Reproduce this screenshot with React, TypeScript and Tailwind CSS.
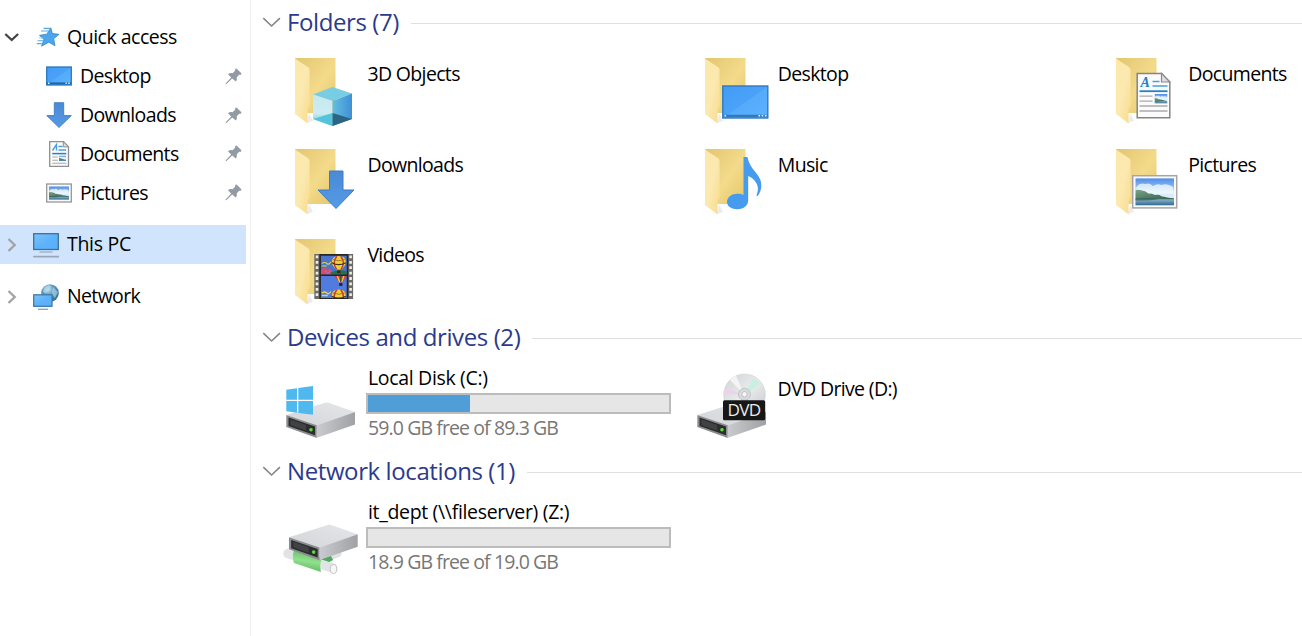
import React from "react";

type Kind = "objects" | "desktop" | "documents" | "downloads" | "music" | "pictures" | "videos";

function Defs() {
  return (
    <svg className="absolute h-0 w-0" aria-hidden="true">
      <defs>
        <linearGradient id="back" x1="0" y1="0" x2="1" y2="1">
          <stop offset="0" stopColor="#e3c56f" />
          <stop offset=".55" stopColor="#f3db8b" />
          <stop offset="1" stopColor="#e5c466" />
        </linearGradient>
        <linearGradient id="leaf" x1="0" y1="0" x2="1" y2="1">
          <stop offset="0" stopColor="#fde8a9" />
          <stop offset=".5" stopColor="#fbe9b0" />
          <stop offset="1" stopColor="#f9db8b" />
        </linearGradient>
        <linearGradient id="screen" x1="0" y1="0" x2="1" y2="1">
          <stop offset="0" stopColor="#429bf5" />
          <stop offset=".5" stopColor="#4ba2f8" />
          <stop offset=".51" stopColor="#55abfb" />
          <stop offset="1" stopColor="#5cb3ff" />
        </linearGradient>
        <linearGradient id="monitor" x1="0" y1="0" x2="1" y2="1">
          <stop offset="0" stopColor="#7cc4fb" />
          <stop offset=".5" stopColor="#5fb3fb" />
          <stop offset="1" stopColor="#5aaefa" />
        </linearGradient>
        <linearGradient id="arrow" x1="0" y1="0" x2="0" y2="1">
          <stop offset="0" stopColor="#4a8ad6" />
          <stop offset="1" stopColor="#559ae6" />
        </linearGradient>
        <linearGradient id="sky" x1="0" y1="0" x2="0" y2="1">
          <stop offset="0" stopColor="#4f8be8" />
          <stop offset=".3" stopColor="#86b6f2" />
          <stop offset=".5" stopColor="#dceefb" />
          <stop offset="1" stopColor="#d2e8f5" />
        </linearGradient>
        <linearGradient id="lake" x1="0" y1="0" x2="0" y2="1">
          <stop offset="0" stopColor="#9dc0cd" />
          <stop offset=".5" stopColor="#6596b3" />
          <stop offset="1" stopColor="#2d6690" />
        </linearGradient>
        <linearGradient id="hill" x1="0" y1="0" x2="1" y2="1">
          <stop offset="0" stopColor="#7ba584" />
          <stop offset="1" stopColor="#315b50" />
        </linearGradient>
        <linearGradient id="cubeL" x1="0" y1="0" x2="0" y2="1">
          <stop offset="0" stopColor="#c5e9f0" />
          <stop offset=".6" stopColor="#cdebf2" />
          <stop offset="1" stopColor="#57c6dc" />
        </linearGradient>
        <linearGradient id="cubeR" x1="0" y1="0" x2="1" y2="0">
          <stop offset="0" stopColor="#63bfdf" />
          <stop offset="1" stopColor="#3f8fd6" />
        </linearGradient>
        <linearGradient id="metal" x1="0" y1="0" x2="1" y2="0">
          <stop offset="0" stopColor="#c9cbce" />
          <stop offset="1" stopColor="#9fa1a4" />
        </linearGradient>
        <linearGradient id="lid" x1="0" y1="1" x2="1" y2="0">
          <stop offset="0" stopColor="#d3d5d8" />
          <stop offset="1" stopColor="#e4e6e9" />
        </linearGradient>
        <linearGradient id="disc" x1="0" y1="0" x2="1" y2="1">
          <stop offset="0" stopColor="#cfd3d5" />
          <stop offset=".5" stopColor="#e9ebec" />
          <stop offset="1" stopColor="#c2c7ca" />
        </linearGradient>
        <linearGradient id="pipe" x1="0.2" y1="0" x2="0" y2="1">
          <stop offset="0" stopColor="#5fc063" />
          <stop offset=".45" stopColor="#92e08e" />
          <stop offset="1" stopColor="#4fb058" />
        </linearGradient>
        <radialGradient id="globe" cx=".4" cy=".3" r=".75">
          <stop offset="0" stopColor="#b5dcef" />
          <stop offset=".5" stopColor="#5593b8" />
          <stop offset="1" stopColor="#2f6890" />
        </radialGradient>
      </defs>
    </svg>
  );
}

function Landscape() {
  return (
    <g>
      <rect width="40" height="28" fill="url(#sky)" />
      <path d="M1 9q4-5 9-3q5-2 8 2q5-3 9-1q6-2 12 2v7H1z" fill="#eff7fd" opacity=".8" />
      <path d="M0 20.5h40V28H0z" fill="url(#lake)" />
      <path d="M0 12.5q3-1 6 0q4 .5 8 3.500q3-1 6 1.300q4-1 7 1.200q4 .8 7 1.500l6 1v.6H0z" fill="url(#hill)" />
      <path d="M0 21q14-1.200 24 .6q-11 1.800-24 1.300z" fill="#2f5456" opacity=".65" />
    </g>
  );
}

function Balloon() {
  return (
    <g>
      <path d="M-7 -1.2Q-7 -7.5 0 -7.5T7 -1.2Q6.6 2.8 2.4 6H-2.4Q-6.6 2.8-7 -1.2z" fill="#f3cf32" />
      <path d="M-2 -7.3Q-7 -1-2.2 6M2 -7.3Q7 -1 2.2 6" fill="none" stroke="#c43d3a" strokeWidth="1.5" />
      <path d="M-7 -.8Q0 3.2 7 -.8" fill="none" stroke="#3a3327" strokeWidth="1.3" />
      <path d="M-6 -4Q0 -1.5 6 -4" fill="none" stroke="#8d6a2c" strokeWidth=".8" />
      <rect x="-1.8" y="7" width="3.6" height="2.6" fill="#352a1c" />
    </g>
  );
}

function Overlay({ kind }: { kind: Kind }) {
  switch (kind) {
    case "objects":
      return (
        <g>
          <path d="M45.5 35L65 41.5L45.5 49L26 42.5z" fill="#79cde3" />
          <path d="M26 42.5L45.5 49V74L26 67z" fill="url(#cubeL)" />
          <path d="M65 41.5L45.5 49V74L65 67z" fill="url(#cubeR)" />
          <path d="M45.5 61L26 67L45.5 74z" fill="#55c4d8" />
          <path d="M45.5 61L65 67L45.5 74z" fill="#2b6484" />
        </g>
      );
    case "desktop":
      return (
        <g>
          <rect x="25.8" y="34" width="45" height="32" fill="url(#screen)" stroke="#2f79bd" strokeWidth="1.4" />
          <path d="M26.5 63.8h44" stroke="#2f79bd" strokeWidth="2.2" />
          <path d="M27.5 63.7h1.6M61.5 63.7h1.6M64.7 63.7h1.6M67.9 63.7h1.6" stroke="#e4f2ff" strokeWidth="1.6" />
        </g>
      );
    case "documents":
      return (
        <g>
          <path d="M29.2 21.4H53.5L61.8 30V65.7H29.2z" fill="#fbfbfb" stroke="#858585" strokeWidth="1.5" />
          <path d="M53.5 21.4V30H61.8z" fill="#dedede" stroke="#8a8a8a" strokeWidth="1.2" />
          <text x="32.5" y="35" fontFamily="Liberation Serif, serif" fontStyle="italic" fontWeight="700" fontSize="14" fill="#2380c9">A</text>
          <path d="M44.5 29.5h7M44.5 34h15" stroke="#4b9fdd" strokeWidth="1.4" />
          <path d="M31.5 39.2h28" stroke="#2380c9" strokeWidth="1.8" />
          <path d="M31.5 44.2h13M31.5 49.2h13M31.5 54h28M31.5 59h28" stroke="#ababab" strokeWidth="1.3" />
          <svg x="46.5" y="42" width="13" height="9.5" viewBox="0 0 40 28" preserveAspectRatio="none"><Landscape /></svg>
        </g>
      );
    case "downloads":
      return <path d="M42.5 28H56V47H67L49 65.5L31 47H42.5z" fill="url(#arrow)" stroke="#3d7cc4" strokeWidth="1" />;
    case "music":
      return <path d="M46.5 14H50.5C53 28 65 31 64.3 43C64.2 47 62.8 50.5 60.5 53C59.5 53 59.3 52.5 59.8 51.5C63.8 42 57 35.5 51.2 33V57C51.2 62.4 47 66.2 40.5 66.2C34.5 66.2 30 63.4 30 59C30 54.3 34.8 50.8 40.5 50.8C43 50.8 45 51.3 46.5 52z" fill="#459bee" />;
    case "pictures":
      return (
        <g>
          <rect x="24.7" y="32.7" width="44" height="32.2" fill="#fafafa" stroke="#a5a5a5" strokeWidth="1.5" />
          <svg x="27.3" y="35.2" width="38.8" height="27.2" viewBox="0 0 40 28" preserveAspectRatio="none"><Landscape /></svg>
        </g>
      );
    case "videos":
      return (
        <g>
          <rect x="27.3" y="21" width="38.8" height="45" fill="#6b6b6b" />
          <rect x="32.3" y="21" width="29" height="45" fill="#272727" />
          <path d="M30 22.5v43M63.6 22.5v43" stroke="#f1eedf" strokeWidth="2.6" strokeDasharray="2.8 2.6" />
          <svg x="33.7" y="22.5" width="26.2" height="19" viewBox="0 0 26 19" overflow="hidden">
            <rect width="26" height="19" fill="#4b74cd" />
            <path d="M1 8q3-2 5 0t4-1.5M1 10.5h5" stroke="#d8d44f" strokeWidth="1.2" fill="none" />
            <path d="M0 15q3-4 6-1.500q3-1.500 5 2V19H0z" fill="#d44e67" />
            <path d="M4 15l3 3 3-3" fill="none" stroke="#b56bb0" strokeWidth="1.2" />
            <path d="M10 17q8-4 16-1v3H10z" fill="#26753e" />
            <g transform="translate(18 8)"><Balloon /></g>
          </svg>
          <svg x="33.7" y="43" width="26.2" height="22" viewBox="0 0 26 22" overflow="hidden">
            <rect width="26" height="22" fill="#527be0" />
            <path d="M13.5 0H26L21.5 6.5h-3z" fill="#cc3b50" />
            <path d="M16.5 0l2.4 6M23.2 0l-2.4 6" stroke="#f0cf31" strokeWidth="1.4" />
            <path d="M19.9 0v6" stroke="#2e5c4a" strokeWidth="1.3" />
            <rect x="18.4" y="7.2" width="3.2" height="2.6" fill="#231d16" />
            <path d="M1 17q3-2 5 0t4-1.5M1 19.5h6" stroke="#e2d650" strokeWidth="1.3" fill="none" />
            <g transform="translate(18 21)"><Balloon /></g>
          </svg>
        </g>
      );
  }
}

function FolderIcon({ kind }: { kind: Kind }) {
  return (
    <svg className="size-20 shrink-0" viewBox="0 0 80 80" aria-hidden="true">
      <path d="M20 71l6-2-4-8z" fill="#ececec" />
      <path d="M8 6H48.5V61H19z" fill="url(#back)" />
      <path d="M8 6.5L20.8 15Q22.6 16.2 22.6 18V53.5Q22.6 55 21.6 56Q20.6 57 20.6 58.5V71.5L8 62z" fill="url(#leaf)" />
      <Overlay kind={kind} />
    </svg>
  );
}

function DriveBody() {
  return (
    <g>
      <path d="M6.3 49L45 36.8Q46.7 36.2 48.4 36.8L75 46L36.5 60z" fill="url(#lid)" />
      <path d="M36.5 59.5L75 46V58.5L37 71.7z" fill="url(#metal)" />
      <path d="M6.3 49L36.7 59.3V72L6.3 61z" fill="#8b8c8e" />
      <path d="M8.5 51.6L35 60.6V69.3L8.5 60z" fill="#2c2d2e" />
      <path d="M10.5 53.5L26 59V64.5L10.5 59z" fill="#414243" />
      <circle cx="31" cy="63.8" r="1.8" fill="#5edb3d" />
    </g>
  );
}

function LocalDiskIcon() {
  return (
    <svg className="size-20 shrink-0" viewBox="0 0 80 80" aria-hidden="true">
      <DriveBody />
      <path d="M6.3 23.7L17 22.2V33.8H6.3zM18.3 22L33 20.1V33.8H18.3zM6.3 35.1H17V46.7L6.3 45.3zM18.3 35.1H33V48.8L18.3 46.9z" fill="#4fb9ef" />
    </svg>
  );
}

function DvdIcon() {
  return (
    <svg className="size-20 shrink-0" viewBox="0 0 80 80" aria-hidden="true">
      <DriveBody />
      <circle cx="53.5" cy="28.8" r="20.8" fill="url(#disc)" stroke="#cbd0d2" strokeWidth=".6" />
      <path d="M53.5 28.8L62 12.5Q66 14 69 17.5z" fill="#c8efdf" />
      <path d="M53.5 28.8L34 22Q33 25 33 28z" fill="#ecd3ec" />
      <path d="M53.5 28.8L39 14Q42 10.8 45 9.8z" fill="#f3f4f4" />
      <circle cx="53.5" cy="28.3" r="6" fill="#d8dbdd" stroke="#bfc4c7" strokeWidth="1" />
      <circle cx="53.5" cy="28.3" r="2.7" fill="#f8f8f8" stroke="#afb4b6" strokeWidth=".8" />
      <rect x="32" y="34.2" width="42.2" height="20" rx="1.5" fill="#171717" />
      <text x="53" y="49.8" textAnchor="middle" fontFamily="Open Sans, sans-serif" fontSize="15.5" textLength="33" lengthAdjust="spacingAndGlyphs" fill="#ececec">DVD</text>
    </svg>
  );
}

function NetworkDriveIcon() {
  return (
    <svg className="size-20 shrink-0" viewBox="0 0 80 80" aria-hidden="true">
      <path d="M42 60L58 53.5" stroke="#dfe1e2" strokeWidth="7" strokeLinecap="round" />
      <path d="M38 63L51 56" stroke="#4fa864" strokeWidth="9" />
      <path d="M8 53.5L52.5 68" stroke="#e1e4e4" strokeWidth="9.5" strokeLinecap="round" />
      <path d="M14.5 49L42 58.5Q39 64 41 72L14 63Q11.500 56 14.5 49z" fill="url(#pipe)" />
      <ellipse cx="53.5" cy="69" rx="3.3" ry="4.5" fill="#f6f6f6" stroke="#c2c5c6" strokeWidth="1" />
      <g transform="translate(2.7 -11.7)">
        <DriveBody />
      </g>
    </svg>
  );
}

function MiniIcon({ kind }: { kind: "desktop" | "downloads" | "documents" | "pictures" }) {
  return (
    <svg className="size-[26px] shrink-0" viewBox="0 0 26 26" aria-hidden="true">
      {kind === "desktop" && (
        <g>
          <rect x=".7" y="4" width="24.6" height="18" fill="url(#screen)" stroke="#2979bf" strokeWidth="1.3" />
          <path d="M1 20.4h24" stroke="#1d65ab" strokeWidth="2" />
          <path d="M2 20.3h1.5M19.5 20.3h1.3M22.2 20.3h1.5" stroke="#e4f2ff" strokeWidth="1.4" />
        </g>
      )}
      {kind === "downloads" && <path d="M8.3.7H17.7V13.6H25.3L13 25.5L.8 13.6H8.3z" fill="url(#arrow)" stroke="#3d7cc4" strokeWidth=".9" />}
      {kind === "documents" && (
        <g>
          <path d="M3.7.7H17.5L22.5 5.7V25.3H3.7z" fill="#fbfbfb" stroke="#8e9091" strokeWidth="1.3" />
          <path d="M17.3.7V5.9H22.5z" fill="#ddd" stroke="#8e9091" strokeWidth="1" />
          <path d="M6.5 9.5L10.5 3.5V9.5M12.5 5.5h4M12.5 9h7.5" stroke="#4b9fdd" strokeWidth="1.4" fill="none" />
          <path d="M6.3 12.6h14" stroke="#2380c9" strokeWidth="1.5" />
          <path d="M6.3 16h5.5M6.3 19.2h5.5M6.3 22.2h14" stroke="#a9a9a9" strokeWidth="1.1" />
          <svg x="13" y="14.5" width="7" height="5.5" viewBox="0 0 40 28" preserveAspectRatio="none"><Landscape /></svg>
        </g>
      )}
      {kind === "pictures" && (
        <g>
          <rect x=".7" y="4" width="24.6" height="18" fill="#fafafa" stroke="#979797" strokeWidth="1.3" />
          <svg x="3" y="6.3" width="20" height="13.4" viewBox="0 0 40 28" preserveAspectRatio="none"><Landscape /></svg>
        </g>
      )}
    </svg>
  );
}

function Pin() {
  return (
    <svg className="ml-auto h-[17px] w-[17px] shrink-0" viewBox="0 0 17 17" aria-hidden="true">
      <path d="M10.4.8Q11.2.3 12 1L16.1 5.1Q16.7 6 16 6.7Q15 7 14.2 6.7L11.8 9.3Q12.3 12 10.8 13.6L7.2 10.4L1.5 16L.5 16.3L.8 15.2L6.2 9.5L3 6.2Q4.8 4.6 7.5 5.2L10.1 2.7Q9.9 1.6 10.4.8z" fill="#929ba3" />
    </svg>
  );
}

function Chevron({ open }: { open?: boolean }) {
  return (
    <svg className="size-4 shrink-0" viewBox="0 0 16 16" aria-hidden="true">
      {open ? (
        <path d="M1.3 5L7.7 11L14.1 5" fill="none" stroke="#444" strokeWidth="2.3" />
      ) : (
        <path d="M4.5 2L10.7 8L4.5 14" fill="none" stroke="#a3a3a3" strokeWidth="2.4" />
      )}
    </svg>
  );
}

function Star() {
  return (
    <svg className="h-5 w-6 shrink-0" viewBox="0 0 24 20" aria-hidden="true">
      <path d="M14.8.8L16.3 6.5L23 7.3L17.6 11.8L19 18.7L12.8 15.2L5.5 19.2L8 12.6L3.5 8.3L10.8 7.2z" fill="#4ca6ee" stroke="#2e86cd" strokeWidth=".8" />
      <path d="M7.5 1.4h7M5 4h7.5M1.500 13.8h5.5M.8 16.6h5" stroke="#5aa9e6" strokeWidth="1.1" />
      <path d="M3 11h4" stroke="#8cc5f1" strokeWidth=".9" />
    </svg>
  );
}

function Computer() {
  return (
    <svg className="size-[26px] shrink-0" viewBox="0 0 26 26" aria-hidden="true">
      <rect x=".7" y="1.7" width="24.6" height="15.8" fill="url(#monitor)" stroke="#3e7194" strokeWidth="1.3" />
      <path d="M6.5 20h13" stroke="#a5b3c4" strokeWidth="1.5" />
      <path d="M1 24.6h24.6" stroke="#9aa5bb" strokeWidth="1.9" strokeLinecap="round" />
    </svg>
  );
}

function NetworkIcon() {
  return (
    <svg className="size-[26px] shrink-0" viewBox="0 0 26 26" aria-hidden="true">
      <circle cx="17" cy="9" r="8.8" fill="url(#globe)" />
      <path d="M11 4q4-4 7-2l-1 4-4 3-3-1zM20 3l5 5-3 6-3-4z" fill="#c5e2ef" opacity=".55" />
      <rect x=".7" y="10.8" width="18.3" height="11.5" fill="url(#monitor)" stroke="#3e7da9" strokeWidth="1.3" />
      <path d="M5 25.3h10" stroke="#8ba1b9" strokeWidth="1.3" />
    </svg>
  );
}

const text = "whitespace-nowrap text-[19.5px] leading-6";

function SectionHeader({ title }: { title: string }) {
  return (
    <header className="flex h-11 items-center pl-[11px]">
      <svg className="h-4 w-5 shrink-0" viewBox="0 0 20 16" aria-hidden="true">
        <path d="M1.3 4.2L9.6 12L17.9 4.2" fill="none" stroke="#858585" strokeWidth="1.6" />
      </svg>
      <h2 className="ml-[5px] shrink-0 whitespace-nowrap text-[24px] leading-8 tracking-[-0.4px] text-[#2b3a8c]">{title}</h2>
      <div className="ml-3 mt-[3px] h-px grow bg-[#e0e0e0]" />
    </header>
  );
}

const folders: { name: string; kind: Kind }[] = [
  { name: "3D Objects", kind: "objects" },
  { name: "Desktop", kind: "desktop" },
  { name: "Documents", kind: "documents" },
  { name: "Downloads", kind: "downloads" },
  { name: "Music", kind: "music" },
  { name: "Pictures", kind: "pictures" },
  { name: "Videos", kind: "videos" },
];

function Drive({ icon, name, used, free }: { icon: React.ReactNode; name: string; used: number; free: string }) {
  return (
    <div className="flex w-[410.5px] shrink-0">
      {icon}
      <div className="ml-1.5 w-[305px]">
        <div className={`pl-0.5 tracking-[-0.33px] ${text}`}>{name}</div>
        <div className="mt-[3px] h-[21px] border-2 border-[#bcbcbc] bg-[#e6e6e6]">
          <div className="h-full bg-[#4f9ed7]" style={{ width: `${used}%` }} />
        </div>
        <div className={`mt-0.5 pl-0.5 tracking-[-0.9px] text-[#777] ${text}`}>{free}</div>
      </div>
    </div>
  );
}

export default function App() {
  return (
    <div className="flex h-[636px] w-[1302px] overflow-hidden bg-white font-['Open_Sans','Noto_Sans',sans-serif] tracking-[-0.65px] text-black">
      <Defs />
      <nav className="w-[251px] shrink-0 border-r border-[#f0f0f0] pt-[17px]">
        <div className="flex h-10 items-center pl-1">
          <Chevron open />
          <span className="ml-4"><Star /></span>
          <span className={`ml-[7px] tracking-[-0.5px] ${text}`}>Quick access</span>
        </div>
        {(["Desktop", "Downloads", "Documents", "Pictures"] as const).map((name) => (
          <div key={name} className="flex h-[38.75px] items-center pl-[46px] pr-2">
            <MiniIcon kind={name.toLowerCase() as "desktop" | "downloads" | "documents" | "pictures"} />
            <span className={`ml-2 ${text}`}>{name}</span>
            <Pin />
          </div>
        ))}
        <div className="mt-[13px] flex h-[39px] w-[246px] items-center bg-[#d0e5fd] pl-1">
          <Chevron />
          <span className="ml-[13px]"><Computer /></span>
          <span className={`ml-2 pb-px tracking-[-0.3px] ${text}`}>This PC</span>
        </div>
        <div className="mt-[13px] flex h-[39px] items-center pl-1">
          <Chevron />
          <span className="ml-[13px]"><NetworkIcon /></span>
          <span className={`ml-2 pb-px ${text}`}>Network</span>
        </div>
      </nav>
      <main className="min-w-0 grow overflow-hidden">
        <section>
          <SectionHeader title="Folders (7)" />
          <div className="grid h-[271px] grid-cols-[410.4px_410.4px_200px] grid-rows-[90.5px_90.5px_82px] pl-9 pt-2">
            {folders.map((f) => (
              <div key={f.name} className="flex">
                <FolderIcon kind={f.kind} />
                <span className={`mt-2.5 ml-[0.4px] ${text}`}>{f.name}</span>
              </div>
            ))}
          </div>
        </section>
        <section>
          <SectionHeader title="Devices and drives (2)" />
          <div className="flex h-[90px] pl-[29px] pt-[7px]">
            <Drive icon={<LocalDiskIcon />} name="Local Disk (C:)" used={34} free="59.0 GB free of 89.3 GB" />
            <div className="flex">
              <DvdIcon />
              <span className={`ml-[7px] mt-[10.5px] ${text}`}>DVD Drive (D:)</span>
            </div>
          </div>
        </section>
        <section>
          <SectionHeader title="Network locations (1)" />
          <div className="flex pl-[29px] pt-[7px]">
            <Drive icon={<NetworkDriveIcon />} name="it_dept (\\fileserver) (Z:)" used={0} free="18.9 GB free of 19.0 GB" />
          </div>
        </section>
      </main>
    </div>
  );
}
